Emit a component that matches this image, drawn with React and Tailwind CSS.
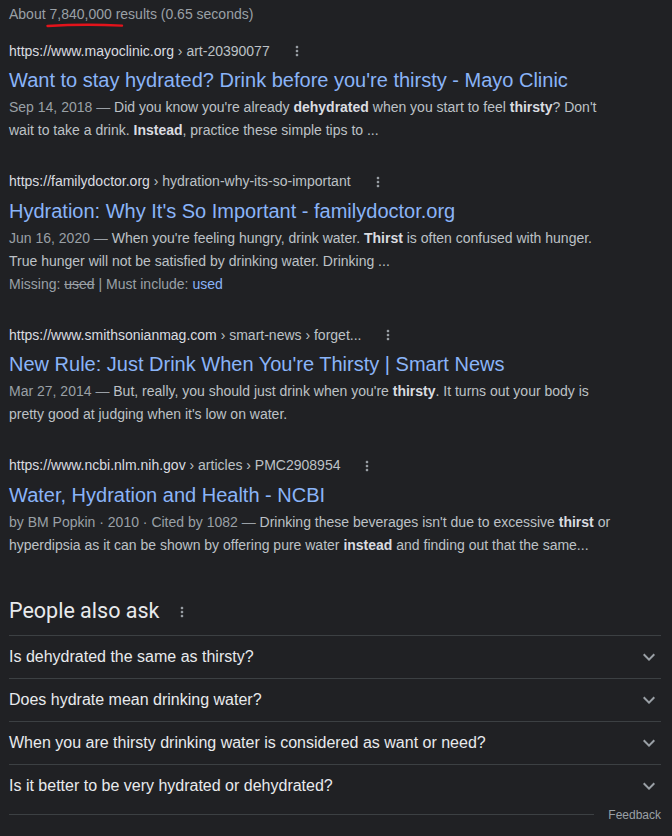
import React from 'react';

const results = [
  {
    site: 'https://www.mayoclinic.org',
    path: ' › art-20390077',
    title: "Want to stay hydrated? Drink before you're thirsty - Mayo Clinic",
    meta: 'Sep 14, 2018 — ',
    snippet: [
      "Did you know you're already ",
      { b: 'dehydrated' },
      ' when you start to feel ',
      { b: 'thirsty' },
      "? Don't wait to take a drink. ",
      { b: 'Instead' },
      ', practice these simple tips to ...',
    ],
  },
  {
    site: 'https://familydoctor.org',
    path: ' › hydration-why-its-so-important',
    title: "Hydration: Why It's So Important - familydoctor.org",
    meta: 'Jun 16, 2020 — ',
    snippet: [
      "When you're feeling hungry, drink water. ",
      { b: 'Thirst' },
      ' is often confused with hunger. True hunger will not be satisfied by drinking water. Drinking ...',
    ],
    missing: true,
  },
  {
    site: 'https://www.smithsonianmag.com',
    path: ' › smart-news › forget...',
    title: "New Rule: Just Drink When You're Thirsty | Smart News",
    meta: 'Mar 27, 2014 — ',
    snippet: [
      "But, really, you should just drink when you're ",
      { b: 'thirsty' },
      ". It turns out your body is pretty good at judging when it's low on water.",
    ],
  },
  {
    site: 'https://www.ncbi.nlm.nih.gov',
    path: ' › articles › PMC2908954',
    title: 'Water, Hydration and Health - NCBI',
    meta: 'by BM Popkin · 2010 · Cited by 1082 — ',
    snippet: [
      "Drinking these beverages isn't due to excessive ",
      { b: 'thirst' },
      ' or hyperdipsia as it can be shown by offering pure water ',
      { b: 'instead' },
      ' and finding out that the same...',
    ],
  },
];

const questions = [
  'Is dehydrated the same as thirsty?',
  'Does hydrate mean drinking water?',
  'When you are thirsty drinking water is considered as want or need?',
  'Is it better to be very hydrated or dehydrated?',
];

function Dots({ className }) {
  return (
    <svg className={className} width="16" height="16" viewBox="0 0 24 24" fill="#9aa0a6">
      <path d="M12 8c1.1 0 2-.9 2-2s-.9-2-2-2-2 .9-2 2 .9 2 2 2zm0 2c-1.1 0-2 .9-2 2s.9 2 2 2 2-.9 2-2-.9-2-2-2zm0 6c-1.1 0-2 .9-2 2s.9 2 2 2 2-.9 2-2-.9-2-2-2z" />
    </svg>
  );
}

function Chevron() {
  return (
    <svg width="24" height="24" viewBox="0 0 24 24" fill="#9aa0a6">
      <path d="M7.41 8.59L12 13.17l4.59-4.58L18 10l-6 6-6-6 1.41-1.41z" />
    </svg>
  );
}

function Result({ r }) {
  return (
    <div className="mb-[28.5px]">
      <div className="flex items-center h-[22px] text-[14px] whitespace-nowrap">
        <span>
          <span className="text-[#dadce0]">{r.site}</span>
          <span className="text-[#bdc1c6]">{r.path}</span>
        </span>
        <Dots className="ml-[19px]" />
      </div>
      <h3 className="pt-[5px] text-[20px] leading-[26px] text-[#8ab4f8]">{r.title}</h3>
      <div className="mt-[3px] w-[606px] text-[14px] leading-[23px] text-[#bdc1c6]">
        <span className="text-[#9aa0a6]">{r.meta}</span>
        {r.snippet.map((part, i) =>
          typeof part === 'string' ? (
            <span key={i}>{part}</span>
          ) : (
            <b key={i} className="font-bold text-[#dadce0]">{part.b}</b>
          )
        )}
      </div>
      {r.missing && (
        <div className="text-[14px] leading-[23px] text-[#9aa0a6]">
          Missing: <s>used</s> | Must include: <span className="text-[#8ab4f8]">used</span>
        </div>
      )}
    </div>
  );
}

export default function App() {
  return (
    <div className="min-h-screen bg-[#202124] pl-[9px] pr-[11px] font-['Liberation_Sans',Arial,sans-serif]">
      <div className="relative h-[28px] flex items-center text-[14px] text-[#9aa0a6]">
        About 7,840,000 results (0.65 seconds)
        <svg className="absolute left-[37px] top-[22px]" width="78" height="7" viewBox="0 0 78 7">
          <path d="M1.5 4 Q38 1.6 76 3.6" stroke="#e3131b" strokeWidth="2.4" fill="none" strokeLinecap="round" />
        </svg>
      </div>

      <div className="mt-[12px]">
        {results.map((r) => (
          <Result key={r.site} r={r} />
        ))}
      </div>

      <div className="mt-[41px]">
        <div className="flex items-center h-[28px] mb-[9px]">
          <h2 className="text-[21.5px] text-[#e8eaed] font-['Roboto',Arial,sans-serif]">People also ask</h2>
          <Dots className="ml-[15px]" />
        </div>
        {questions.map((q) => (
          <div key={q} className="flex items-center justify-between h-[43px] border-t border-[#3c4043] text-[16px] text-[#e8eaed]">
            <span>{q}</span>
            <Chevron />
          </div>
        ))}
        <div className="flex items-center h-[16px]">
          <div className="flex-1 h-px bg-[#3c4043] mr-[14px]" />
          <span className="text-[12px] text-[#9aa0a6]">Feedback</span>
        </div>
      </div>
    </div>
  );
}
